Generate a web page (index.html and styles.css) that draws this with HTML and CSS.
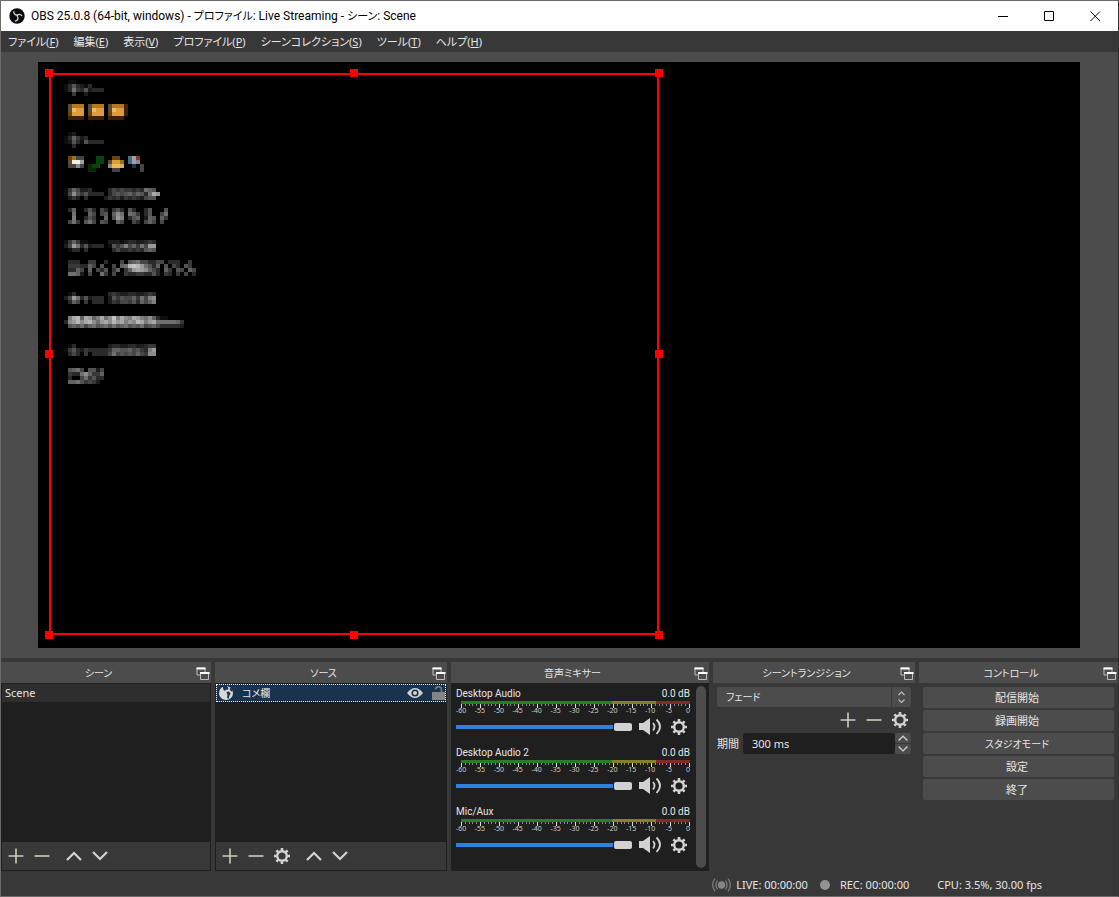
FILE: index.html
```html
<!DOCTYPE html>
<html lang="ja">
<head>
<meta charset="utf-8">
<title>OBS 25.0.8</title>
<link rel="stylesheet" href="styles.css">
</head>
<body>
<svg class="defs" aria-hidden="true">
  <symbol id="plus" viewBox="0 0 16 16"><path d="M8 0.5v15M0.5 8h15" stroke="#cbccbd" stroke-width="1.6" fill="none"/></symbol>
  <symbol id="minus" viewBox="0 0 16 16"><path d="M0.5 8h15" stroke="#cbccbd" stroke-width="1.6" fill="none"/></symbol>
  <symbol id="up" viewBox="0 0 16 16"><path d="M1 12L8 5l7 7" stroke="#d2d2d2" stroke-width="2.2" fill="none"/></symbol>
  <symbol id="down" viewBox="0 0 16 16"><path d="M1 4l7 7 7-7" stroke="#d2d2d2" stroke-width="2.2" fill="none"/></symbol>
  <symbol id="gear" viewBox="0 0 16 16">
    <circle cx="8" cy="8" r="4.8" fill="none" stroke="#d2d2d2" stroke-width="2.4"/>
    <path d="M8 0v3M8 13v3M0 8h3M13 8h3M2.4 2.4l2 2M11.6 11.6l2 2M2.4 13.6l2-2M11.6 4.4l2-2" stroke="#d2d2d2" stroke-width="2.6" fill="none"/>
  </symbol>
  <symbol id="float" viewBox="0 0 14 13">
    <path d="M1 1h8v7H1z" fill="none" stroke="#bdbdbd" stroke-width="1"/><path d="M0.5 0.5h9v2h-9z" fill="#fff"/>
    <path d="M4.5 5.5h8v7h-8z" fill="#4c4c4c" stroke="#bdbdbd" stroke-width="1"/><path d="M4 5h9.5v2H4z" fill="#fff"/>
  </symbol>
  <symbol id="speaker" viewBox="0 0 23 18">
    <path d="M0 5h4l7-5v17l-7-5H0z" fill="#d2d2d2"/>
    <path d="M14 5q3 3.500 0 7.500M17.500 1.500q7 7 0 14.500" fill="none" stroke="#d2d2d2" stroke-width="1.800"/>
  </symbol>
</svg>
<div class="window">
  <header class="titlebar">
    <svg class="logo" viewBox="0 0 16 16" aria-hidden="true">
      <circle cx="8" cy="8" r="7.700" fill="#0b0b0f"/>
      <g fill="none" stroke="#ddd" stroke-width="1.300">
        <path d="M4.800 3.200C4.500 6 6.500 7.500 8.700 6.800"/>
        <path d="M13 8C11.500 5.600 8.800 6 7.900 8.200"/>
        <path d="M6 13.200C9 12.500 9.700 10.200 8.200 8"/>
      </g>
    </svg>
    <h1 class="caption">OBS 25.0.8 (64-bit, windows) - <span>プロファイル</span>: Live Streaming - <span>シーン</span>: Scene</h1>
    <button class="winbtn" aria-label="最小化"><svg viewBox="0 0 11 11"><path d="M0 5.500h10" stroke="#000"/></svg></button>
    <button class="winbtn" aria-label="最大化"><svg viewBox="0 0 11 11"><path d="M.5 .5h9v9h-9z" fill="none" stroke="#000"/></svg></button>
    <button class="winbtn" aria-label="閉じる"><svg viewBox="0 0 11 11"><path d="M.5 .5l9.500 9.500M10 .5L.5 10" stroke="#000"/></svg></button>
  </header>
  <nav class="menubar">
    <button>ファイル(<u>F</u>)</button>
    <button>編集(<u>E</u>)</button>
    <button>表示(<u>V</u>)</button>
    <button>プロファイル(<u>P</u>)</button>
    <button>シーンコレクション(<u>S</u>)</button>
    <button>ツール(<u>T</u>)</button>
    <button>ヘルプ(<u>H</u>)</button>
  </nav>
  <main class="preview">
    <svg class="canvas" viewBox="0 0 1042 586" preserveAspectRatio="xMidYMid meet">
      <rect width="1042" height="586" fill="#000"/>
      <g id="mosaic" shape-rendering="crispEdges"></g>
      <rect x="12" y="12" width="608" height="560" fill="none" stroke="#f00" stroke-width="2"/>
      <path fill="#f00" d="M7 7h8v8H7zM312 7h8v8h-8zM617 7h8v8h-8zM7 288h8v8H7zM617 288h8v8h-8zM7 569h8v8H7zM312 569h8v8h-8zM617 569h8v8h-8z"/>
    </svg>
  </main>
  <div class="docks">
    <section class="dock">
      <header class="dockhead"><h2>シーン</h2><button aria-label="フロート"><svg><use href="#float"/></svg></button></header>
      <div class="listbox">
        <ul class="list"><li class="scene">Scene</li></ul>
        <div class="toolbar">
          <button aria-label="追加"><svg><use href="#plus"/></svg></button>
          <button aria-label="削除"><svg><use href="#minus"/></svg></button>
          <button class="apart" aria-label="上へ"><svg><use href="#up"/></svg></button>
          <button aria-label="下へ"><svg><use href="#down"/></svg></button>
        </div>
      </div>
    </section>
    <section class="dock">
      <header class="dockhead"><h2>ソース</h2><button aria-label="フロート"><svg><use href="#float"/></svg></button></header>
      <div class="listbox">
        <ul class="list">
          <li class="source">
            <svg class="globe" viewBox="0 0 14 14" aria-hidden="true"><circle cx="7" cy="7" r="7" fill="#d8d8d8"/><path d="M3.500 0L8 0l1.500 2-1 2L7 3.500 6 5 4.500 4zM7.500 6l2.500-.5 1.500 2L10.500 9.500 9.500 13 8 11.500 8.500 9zM10.500 3l1.500-1.500 2 3.500-2 .5z" fill="#19334f"/></svg>
            <span class="name">コメ欄</span>
            <button aria-label="表示"><svg class="eye" viewBox="0 0 16 10"><path d="M0 5Q8-5 16 5 8 15 0 5z" fill="#d2d2d2"/><circle cx="8" cy="5" r="3.600" fill="#19334f"/><circle cx="8" cy="5" r="2" fill="#d2d2d2"/></svg></button>
            <button aria-label="ロック"><svg class="lock" viewBox="0 0 13 14"><path d="M0 6h13v8H0z" fill="#848484"/><path d="M3.500 3.500C4-0.200 9.500-.2 9.500 3.500V6" fill="none" stroke="#747b82" stroke-width="1.700"/></svg></button>
          </li>
        </ul>
        <div class="toolbar">
          <button aria-label="追加"><svg><use href="#plus"/></svg></button>
          <button aria-label="削除"><svg><use href="#minus"/></svg></button>
          <button aria-label="プロパティ"><svg><use href="#gear"/></svg></button>
          <button class="apart" aria-label="上へ"><svg><use href="#up"/></svg></button>
          <button aria-label="下へ"><svg><use href="#down"/></svg></button>
        </div>
      </div>
    </section>
    <section class="dock">
      <header class="dockhead"><h2>音声ミキサー</h2><button aria-label="フロート"><svg><use href="#float"/></svg></button></header>
      <div class="mixer">
        <div class="channels">
          <div class="channel">
            <div class="chead"><label for="v1">Desktop Audio</label><span>0.0 dB</span></div>
            <div class="meter"></div><svg class="ticks" viewBox="0 0 229 4"></svg><div class="scale"></div>
            <div class="cfoot"><input id="v1" type="range" value="100"><button aria-label="ミュート"><svg class="spk"><use href="#speaker"/></svg></button><button aria-label="設定"><svg class="gear"><use href="#gear"/></svg></button></div>
          </div>
          <div class="channel">
            <div class="chead"><label for="v2">Desktop Audio 2</label><span>0.0 dB</span></div>
            <div class="meter"></div><svg class="ticks" viewBox="0 0 229 4"></svg><div class="scale"></div>
            <div class="cfoot"><input id="v2" type="range" value="100"><button aria-label="ミュート"><svg class="spk"><use href="#speaker"/></svg></button><button aria-label="設定"><svg class="gear"><use href="#gear"/></svg></button></div>
          </div>
          <div class="channel">
            <div class="chead"><label for="v3">Mic/Aux</label><span>0.0 dB</span></div>
            <div class="meter"></div><svg class="ticks" viewBox="0 0 229 4"></svg><div class="scale"></div>
            <div class="cfoot"><input id="v3" type="range" value="100"><button aria-label="ミュート"><svg class="spk"><use href="#speaker"/></svg></button><button aria-label="設定"><svg class="gear"><use href="#gear"/></svg></button></div>
          </div>
        </div>
        <div class="scrollbar"></div>
      </div>
    </section>
    <section class="dock">
      <header class="dockhead"><h2>シーントランジション</h2><button aria-label="フロート"><svg><use href="#float"/></svg></button></header>
      <div class="transitions">
        <div class="combo">
          <select aria-label="トランジション"><option>フェード</option></select>
          <svg class="arrows" viewBox="0 0 20 20" aria-hidden="true"><path d="M0.500 0v20" stroke="#3a3a3a"/><path d="M7.500 8l3-3 3 3M7.500 12.500l3 3 3-3" fill="none" stroke="#bbb" stroke-width="1.200"/></svg>
        </div>
        <div class="ttools">
          <button aria-label="追加"><svg><use href="#plus"/></svg></button>
          <button aria-label="削除"><svg><use href="#minus"/></svg></button>
          <button aria-label="プロパティ"><svg><use href="#gear"/></svg></button>
        </div>
        <div class="duration">
          <label for="dur">期間</label>
          <input id="dur" type="text" value="300 ms">
          <div class="spin">
            <button aria-label="増やす"><svg><use href="#up"/></svg></button>
            <button aria-label="減らす"><svg><use href="#down"/></svg></button>
          </div>
        </div>
      </div>
    </section>
    <section class="dock">
      <header class="dockhead"><h2>コントロール</h2><button aria-label="フロート"><svg><use href="#float"/></svg></button></header>
      <div class="controls">
        <button>配信開始</button>
        <button>録画開始</button>
        <button class="kana">スタジオモード</button>
        <button>設定</button>
        <button>終了</button>
      </div>
    </section>
  </div>
  <footer class="status">
    <span class="stat live"><svg class="antenna" viewBox="0 0 19 14" aria-hidden="true"><circle cx="9.500" cy="7" r="3.700" fill="#858585"/><path d="M5.500 2.500q-3 4.500 0 9M13.500 2.500q3 4.500 0 9M3 .5q-4.500 6.500 0 13M16 .5q4.500 6.500 0 13" fill="none" stroke="#7d7d7d" stroke-width="1.300"/></svg>LIVE: 00:00:00</span>
    <span class="stat rec"><i class="dot"></i>REC: 00:00:00</span>
    <span class="stat">CPU: 3.5%, 30.00 fps</span>
  </footer>
</div>
<script src="app.js"></script>
</body>
</html>
```
FILE: styles.css
```css
* { box-sizing: border-box; }
body {
  margin: 0;
  font: 11px/16px "Noto Sans", "Noto Sans CJK JP", sans-serif;
  font-feature-settings: "palt";
  color: #e6e6e6;
}
button, input, select { font: inherit; font-feature-settings: inherit; color: inherit; border: 0; padding: 0; margin: 0; background: none; }
h1, h2, ul { margin: 0; padding: 0; font-weight: normal; list-style: none; }
svg { display: block; }
.defs { position: absolute; width: 0; height: 0; }

.window {
  display: flex;
  flex-direction: column;
  height: 100vh;
  background: #383838;
  border: 1px solid #6b6b6b;
  border-right-color: #303030;
}

.titlebar { display: flex; align-items: center; height: 30px; background: #fff; color: #000; padding-left: 8px; }
.logo { width: 16px; height: 16px; }
.caption { flex: 1; font-family: Roboto, "Noto Sans CJK JP", sans-serif; font-size: 12px; line-height: 16px; padding-left: 6px; white-space: nowrap; }
.caption span { font-size: 11px; }
.winbtn { width: 46px; height: 30px; display: grid; place-items: center; }
.winbtn svg { width: 11px; height: 11px; }

.menubar { display: flex; height: 21px; padding-left: 7px; gap: 15px; font-size: 11px; }
.menubar button { white-space: nowrap; }

.preview { flex: 1; min-height: 0; background: #4c4c4c; padding: 10px 38px 10px 37px; }
.canvas { width: 100%; height: 100%; }

.docks { display: grid; grid-template-columns: 210fr 232fr 258fr 202fr 199fr; gap: 4px; padding-top: 4px; height: 213px; }
.dock { display: flex; flex-direction: column; min-width: 0; }
.dockhead { display: flex; align-items: center; height: 21px; flex: none; background: #4c4c4c; padding: 1px 1px 0 0; }
.dockhead h2 { flex: 1; text-align: center; font-size: 10px; line-height: 20px; }
.dockhead svg { width: 14px; height: 13px; }

.listbox { flex: 1; display: flex; flex-direction: column; border: 1px solid #1f1f1f; }
.list { flex: 1; background: #1f1f1f; }
.scene { height: 18px; background: #2e2e2e; padding-left: 3px; line-height: 17px; }
.source { display: flex; align-items: center; height: 18px; background: #19334f; border: 1px dotted #fff; padding: 0 0 0 2px; }
.globe { width: 14px; height: 14px; }
.name { flex: 1; padding-left: 9px; font-size: 10px; }
.eye { width: 16px; height: 10px; margin-right: 9px; }
.lock { width: 13px; height: 14px; }
.toolbar { display: flex; height: 28px; padding-left: 1px; }
.toolbar button { width: 26px; display: grid; place-items: center; }
.toolbar svg, .ttools svg { width: 16px; height: 16px; }
.toolbar .apart { margin-left: 6px; }

.mixer { flex: 1; display: flex; background: #1f1f1f; padding: 3px 3px 3px 5px; gap: 6px; }
.channels { flex: 1; min-width: 0; }
.channel { height: 59px; }
.chead { display: flex; justify-content: space-between; font-family: Roboto, sans-serif; font-size: 10px; line-height: 15px; }
.meter { height: 3px; margin-left: 5px; background: linear-gradient(to right, #267f26 0 66%, #84802a 66% 85%, #842a26 85%); }
.ticks { width: calc(100% - 5px); margin-left: 5px; }
.scale { display: flex; justify-content: space-between; height: 7px; margin: 0 2px 0 5px; font-size: 7px; line-height: 6px; color: #ccc; }
.scale span { width: 0; display: flex; justify-content: center; }
.cfoot { display: flex; align-items: center; height: 24px; padding-right: 3px; }
.cfoot input { flex: 1; min-width: 0; appearance: none; height: 8px; margin-right: 7px; background: linear-gradient(#2f82dc, #2f82dc) 0 2px / calc(100% - 19px) 4px no-repeat; }
.cfoot input::-webkit-slider-thumb { appearance: none; width: 18px; height: 8px; border-radius: 2px; background: #d2d2d2; }
.spk { width: 23px; height: 18px; margin-right: 9px; }
.gear { width: 16px; height: 16px; }
.scrollbar { width: 10px; border-radius: 5px; background: #4c4c4c; }

.transitions { padding: 4px; }
.combo { position: relative; height: 20px; }
.combo select { appearance: none; width: 100%; height: 20px; padding-left: 9px; background: #4c4c4c; border-radius: 2px; font-size: 10px; }
.arrows { position: absolute; right: 0; top: 0; width: 20px; height: 20px; pointer-events: none; }
.ttools { display: flex; justify-content: flex-end; gap: 10px; height: 26px; align-items: center; padding-right: 3px; }
.duration { display: flex; height: 21px; align-items: center; }
.duration label { width: 26px; }
.duration input { flex: 1; min-width: 0; height: 21px; padding-left: 9px; background: #1f1f1f; border-radius: 3px; }
.spin { width: 16px; height: 21px; display: grid; gap: 1px; }
.spin button { background: #4c4c4c; border-radius: 2px; display: grid; place-items: center; }
.spin svg { width: 10px; height: 10px; }

.controls { display: grid; gap: 2px; padding: 4px; }
.controls button { height: 21px; background: #4c4c4c; border-radius: 2px; text-align: center; padding-right: 3px; }
.controls .kana { font-size: 10px; }

.status { display: flex; justify-content: flex-end; align-items: center; height: 25px; padding: 3px 76px 0 0; white-space: nowrap; }
.stat { display: flex; align-items: center; }
.live { margin-right: 12px; }
.rec { margin-right: 28px; }
.antenna { width: 19px; height: 14px; margin-right: 5px; }
.dot { width: 10px; height: 10px; border-radius: 5px; background: #929292; margin-right: 10px; }
```
FILE: app.js
```js
const NS = 'http://www.w3.org/2000/svg';
function rect(parent, x, y, w, h, fill) {
  const r = document.createElementNS(NS, 'rect');
  for (const [k, v] of Object.entries({ x, y, width: w, height: h, fill })) r.setAttribute(k, v);
  parent.append(r);
}

// Blurred chat overlay as 4px cells: [row, hex brightness per column].
const cells = [
  [0, '.11'], [1, '1363213'], [2, '1384362333'], [3, '..4..2'],
  [13, '.12'], [14, '137423'], [15, '1263163333'], [16, '..3'],
  [27, '1475223....354544343876'], [28, '15a6463333.35656757638cb'], [29, '.242.3....2434243432566'],
  [32, '.37..363.53.463.63..36...6'], [33, '..8...75.56.7a8.874.36..58'], [34, '..9..364..7.6b9.367.276.74'], [35, '.584.685.65..75..53.575.5'],
  [40, '147411.....222123322343'], [41, '25b8362333.1646957485bb'], [42, '.133.3......35334343676'],
  [45, '.333..44..3...5.678553355.333..4'], [46, '.4443375.6..5.78dedb8637.6.53.64'], [47, '.3375.7.536.47.47bcba753.74.65.75'], [48, '.8872.5..84.5..433443363.43.4.5.3'],
  [53, '.13........343223322343'], [54, '25b8362333.26465574859a'], [55, '.375.4.333.243554637579'],
  [59, '.9cd7cb79c8ae9ca9cb98a7311'], [60, '3abdacda8bcadbc9badc9bc8888874'], [61, '.67685786786867867685675333332'],
  [66, '.13........233223322344'], [67, '1463243333347766756439b'], [68, '.353.4.33335856565754aa'],
  [72, '.6785.6625'], [73, '.4338a7447'], [74, '.3..584633'], [75, '.77864542']
];
const tint = {
  o: '#b7771f', O: '#dd9c3c', y: '#f2b95c', d: '#3b2208', D: '#6b4312', b: '#5a4a38', r: '#863820',
  w: '#f0f0e0', g: '#888', k: '#444', n: '#0b430f', N: '#062806', h: '#9a7410', s: '#456b80', p: '#a0a0ac', t: '#d0b070', q: '#123850'
};
const emoji = [
  [6, '.booo.booo.boood'], [7, '.byOO.byOO.byOOd'], [8, '.DOOO.DOOO.DOOOd'], [9, '.dddd.dddd.dddd'],
  [19, '.Dhkk...nn..DD..spr'], [20, '.bwwp...nn.bOOh.spg'], [21, '.kkgk.Nnn..gyyt..q.k'], [22, '......NN....kk.....k']
];
const mosaic = document.getElementById('mosaic');
const CELL = 4, LEFT = 26, TOP = 18;
function paint(rows, colour) {
  for (const [row, line] of rows) {
    [...line].forEach((c, i) => {
      if (c !== '.') rect(mosaic, LEFT + i * CELL, TOP + row * CELL, CELL, CELL, colour(c));
    });
  }
}
paint(cells, c => { const v = parseInt(c, 16) * 14; return `rgb(${v},${v},${v})`; });
paint(emoji, c => tint[c]);

document.querySelectorAll('.ticks').forEach(svg => {
  for (let i = 0; i <= 60; i++) rect(svg, Math.round(i * 228 / 60), 0, 1, i % 5 ? 2 : 4, i % 5 ? '#8a8a8a' : '#ddd');
});
document.querySelectorAll('.scale').forEach(scale => {
  for (let db = -60; db <= 0; db += 5) {
    const s = document.createElement('span');
    s.textContent = db;
    scale.append(s);
  }
});
```
